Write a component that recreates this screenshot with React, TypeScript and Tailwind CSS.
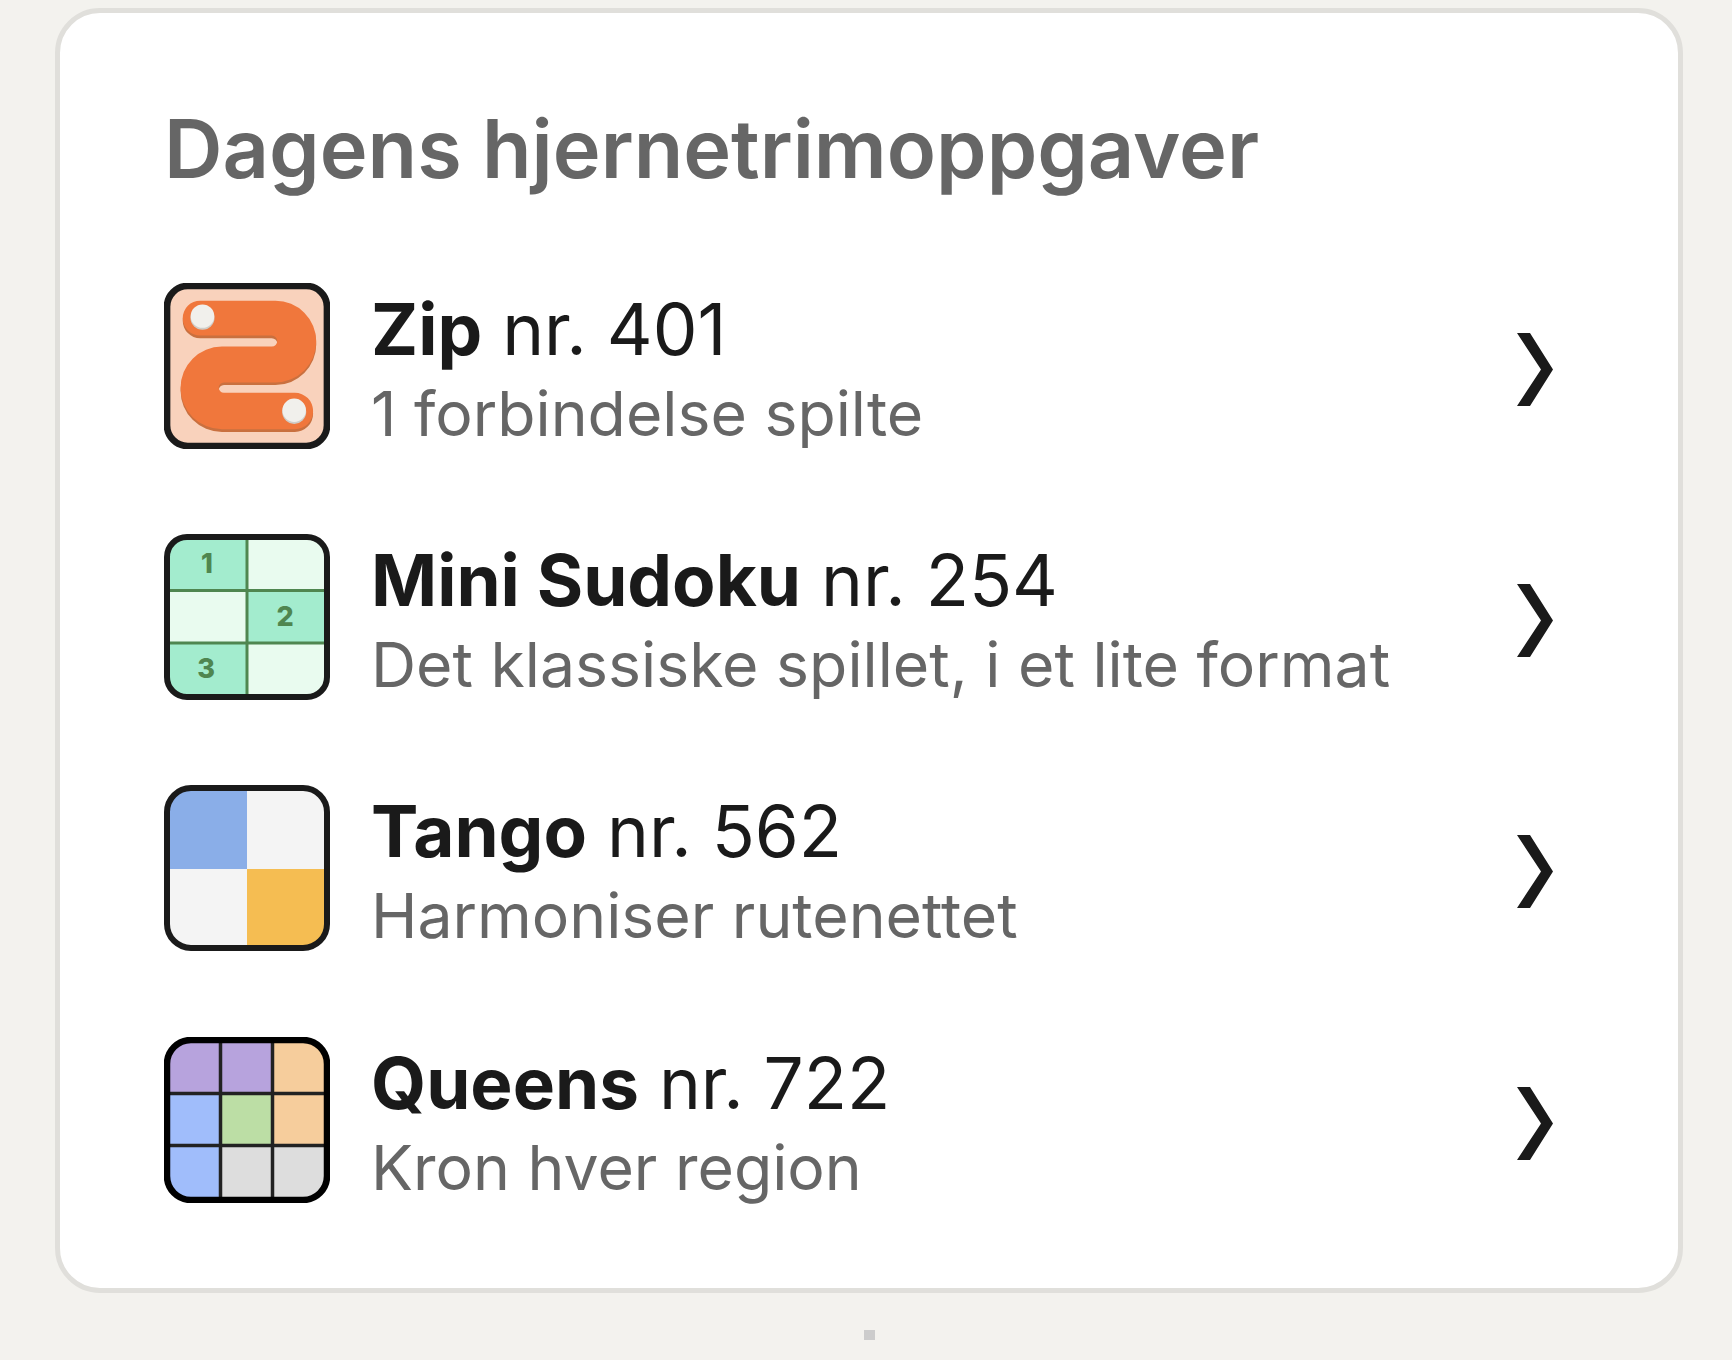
import React from "react";
import { ReactNode } from "react";

function ZipIcon() {
    const d = "M150 103 H375 A122 122 0 0 1 375 347 H221 A15.5 15.5 0 0 0 221 378 H433 A54.5 54.5 0 0 1 433 487 H215 A123.5 123.5 0 0 1 215 240 H364 A16.5 16.5 0 0 0 364 207 H150 A52 52 0 0 1 150 103 Z";
    return (
        <svg viewBox="42 42 496 496" className="w-[166px] h-[166px] shrink-0">
            <rect x="51" y="51" width="478" height="478" rx="62" fill="#f9d2bc" stroke="#1a1a1a" strokeWidth="20" />
            <path d={d} fill="#c9703f" />
            <path d={d} fill="#f0773c" transform="translate(0 -8)" />
            <circle cx="157" cy="146" r="36" fill="#cfcdc8" />
            <circle cx="157" cy="141" r="35" fill="#f1f0ec" />
            <circle cx="431" cy="427" r="36" fill="#cfcdc8" />
            <circle cx="431" cy="422" r="35" fill="#f1f0ec" />
        </svg>
    );
}

function SudokuIcon() {
    const g = "#4f8650";
    return (
        <svg viewBox="0 0 166 166" className="w-[166px] h-[166px] shrink-0">
            <defs>
                <clipPath id="sudokuClip"><rect x="3" y="3" width="160" height="160" rx="20" /></clipPath>
            </defs>
            <g clipPath="url(#sudokuClip)">
                <rect width="166" height="166" fill="#e9fbef" />
                <rect x="0" y="0" width="83" height="56" fill="#a3ecce" />
                <rect x="83" y="56" width="83" height="54" fill="#a3ecce" />
                <rect x="0" y="110" width="83" height="56" fill="#a3ecce" />
                <path d="M83 0V166M0 56.5H166M0 109H166" stroke={g} strokeWidth="3" />
            </g>
            <rect x="3" y="3" width="160" height="160" rx="20" fill="none" stroke="#1a1a1a" strokeWidth="6" />
            <g fill={g} fontFamily="Inter, sans-serif" fontWeight="800" fontSize="27" textAnchor="middle">
                <text x="43" y="39">1</text>
                <text x="121" y="92">2</text>
                <text x="42" y="144">3</text>
            </g>
        </svg>
    );
}

function TangoIcon() {
    return (
        <svg viewBox="0 0 166 166" className="w-[166px] h-[166px] shrink-0">
            <defs>
                <clipPath id="tangoClip"><rect x="3" y="3" width="160" height="160" rx="24" /></clipPath>
            </defs>
            <g clipPath="url(#tangoClip)">
                <rect width="166" height="166" fill="#f4f4f4" />
                <rect x="0" y="0" width="83" height="84" fill="#8aaee8" />
                <rect x="83" y="84" width="83" height="82" fill="#f5bd52" />
            </g>
            <rect x="3" y="3" width="160" height="160" rx="24" fill="none" stroke="#1a1a1a" strokeWidth="6" />
        </svg>
    );
}

function QueensIcon() {
    const cells = [
        "#b7a3dd", "#b7a3dd", "#f6cd9c",
        "#a0bdfb", "#bcdea5", "#f6cd9c",
        "#a0bdfb", "#dddddd", "#dddddd",
    ];
    const starts = [0, 56.5, 108.5];
    return (
        <svg viewBox="0 0 166 166" className="w-[166px] h-[166px] shrink-0">
            <defs>
                <clipPath id="queensClip"><rect x="3" y="3" width="160" height="160" rx="24" /></clipPath>
            </defs>
            <g clipPath="url(#queensClip)">
                {cells.map((c, i) => (
                    <rect key={i} x={starts[i % 3]} y={starts[Math.floor(i / 3)]} width="58" height="58" fill={c} />
                ))}
                <path d="M56.5 0V166M108.5 0V166M0 56.5H166M0 108.5H166" stroke="#222222" strokeWidth="3.5" />
            </g>
            <rect x="3" y="3" width="160" height="160" rx="24" fill="none" stroke="#000000" strokeWidth="6.5" />
        </svg>
    );
}

function Chevron() {
    return (
        <svg viewBox="0 0 36 73" className="w-[36px] h-[73px] shrink-0 mr-[13px] mt-[7px]">
            <path d="M0 0H13L36 36.5L13 73H0L24 36.5Z" fill="#1a1a1a" />
        </svg>
    );
}

function GameRow({ icon, name, num, desc }: { icon: ReactNode; name: string; num: string; desc: string }) {
    return (
        <div className="flex items-center h-[251.4px]">
            {icon}
            <div className="flex-1 ml-[41px] pt-[8px] min-w-0">
                <div className="text-[71px] leading-[84px] text-[#1a1a1a]">
                    <span className="font-bold">{name}</span> {num}
                </div>
                <div className="text-[62.5px] leading-[80px] mt-[2px] text-[#666666]">{desc}</div>
            </div>
            <Chevron />
        </div>
    );
}

export default function App() {
    return (
        <main className="bg-[#f3f2ee] h-[1360px] pt-[8px] pl-[55px] pr-[49px] overflow-hidden font-['Inter',sans-serif]">
            <section className="bg-white border-[5px] border-[#e0dfdb] rounded-[45px] h-[1285px] pl-[104px] pr-[112px] pt-[88px]">
                <h2 className="text-[81px] leading-[96px] font-semibold text-[#666666]">
                    Dagens hjernetrimoppgaver
                </h2>
                <div className="mt-[43px]">
                    <GameRow icon={<ZipIcon />} name="Zip" num="nr. 401" desc="1 forbindelse spilte" />
                    <GameRow icon={<SudokuIcon />} name="Mini Sudoku" num="nr. 254" desc="Det klassiske spillet, i et lite format" />
                    <GameRow icon={<TangoIcon />} name="Tango" num="nr. 562" desc="Harmoniser rutenettet" />
                    <GameRow icon={<QueensIcon />} name="Queens" num="nr. 722" desc="Kron hver region" />
                </div>
            </section>
            <div className="w-[11px] h-[10px] bg-[#cccccc] mx-auto mt-[37px]" />
        </main>
    );
}
